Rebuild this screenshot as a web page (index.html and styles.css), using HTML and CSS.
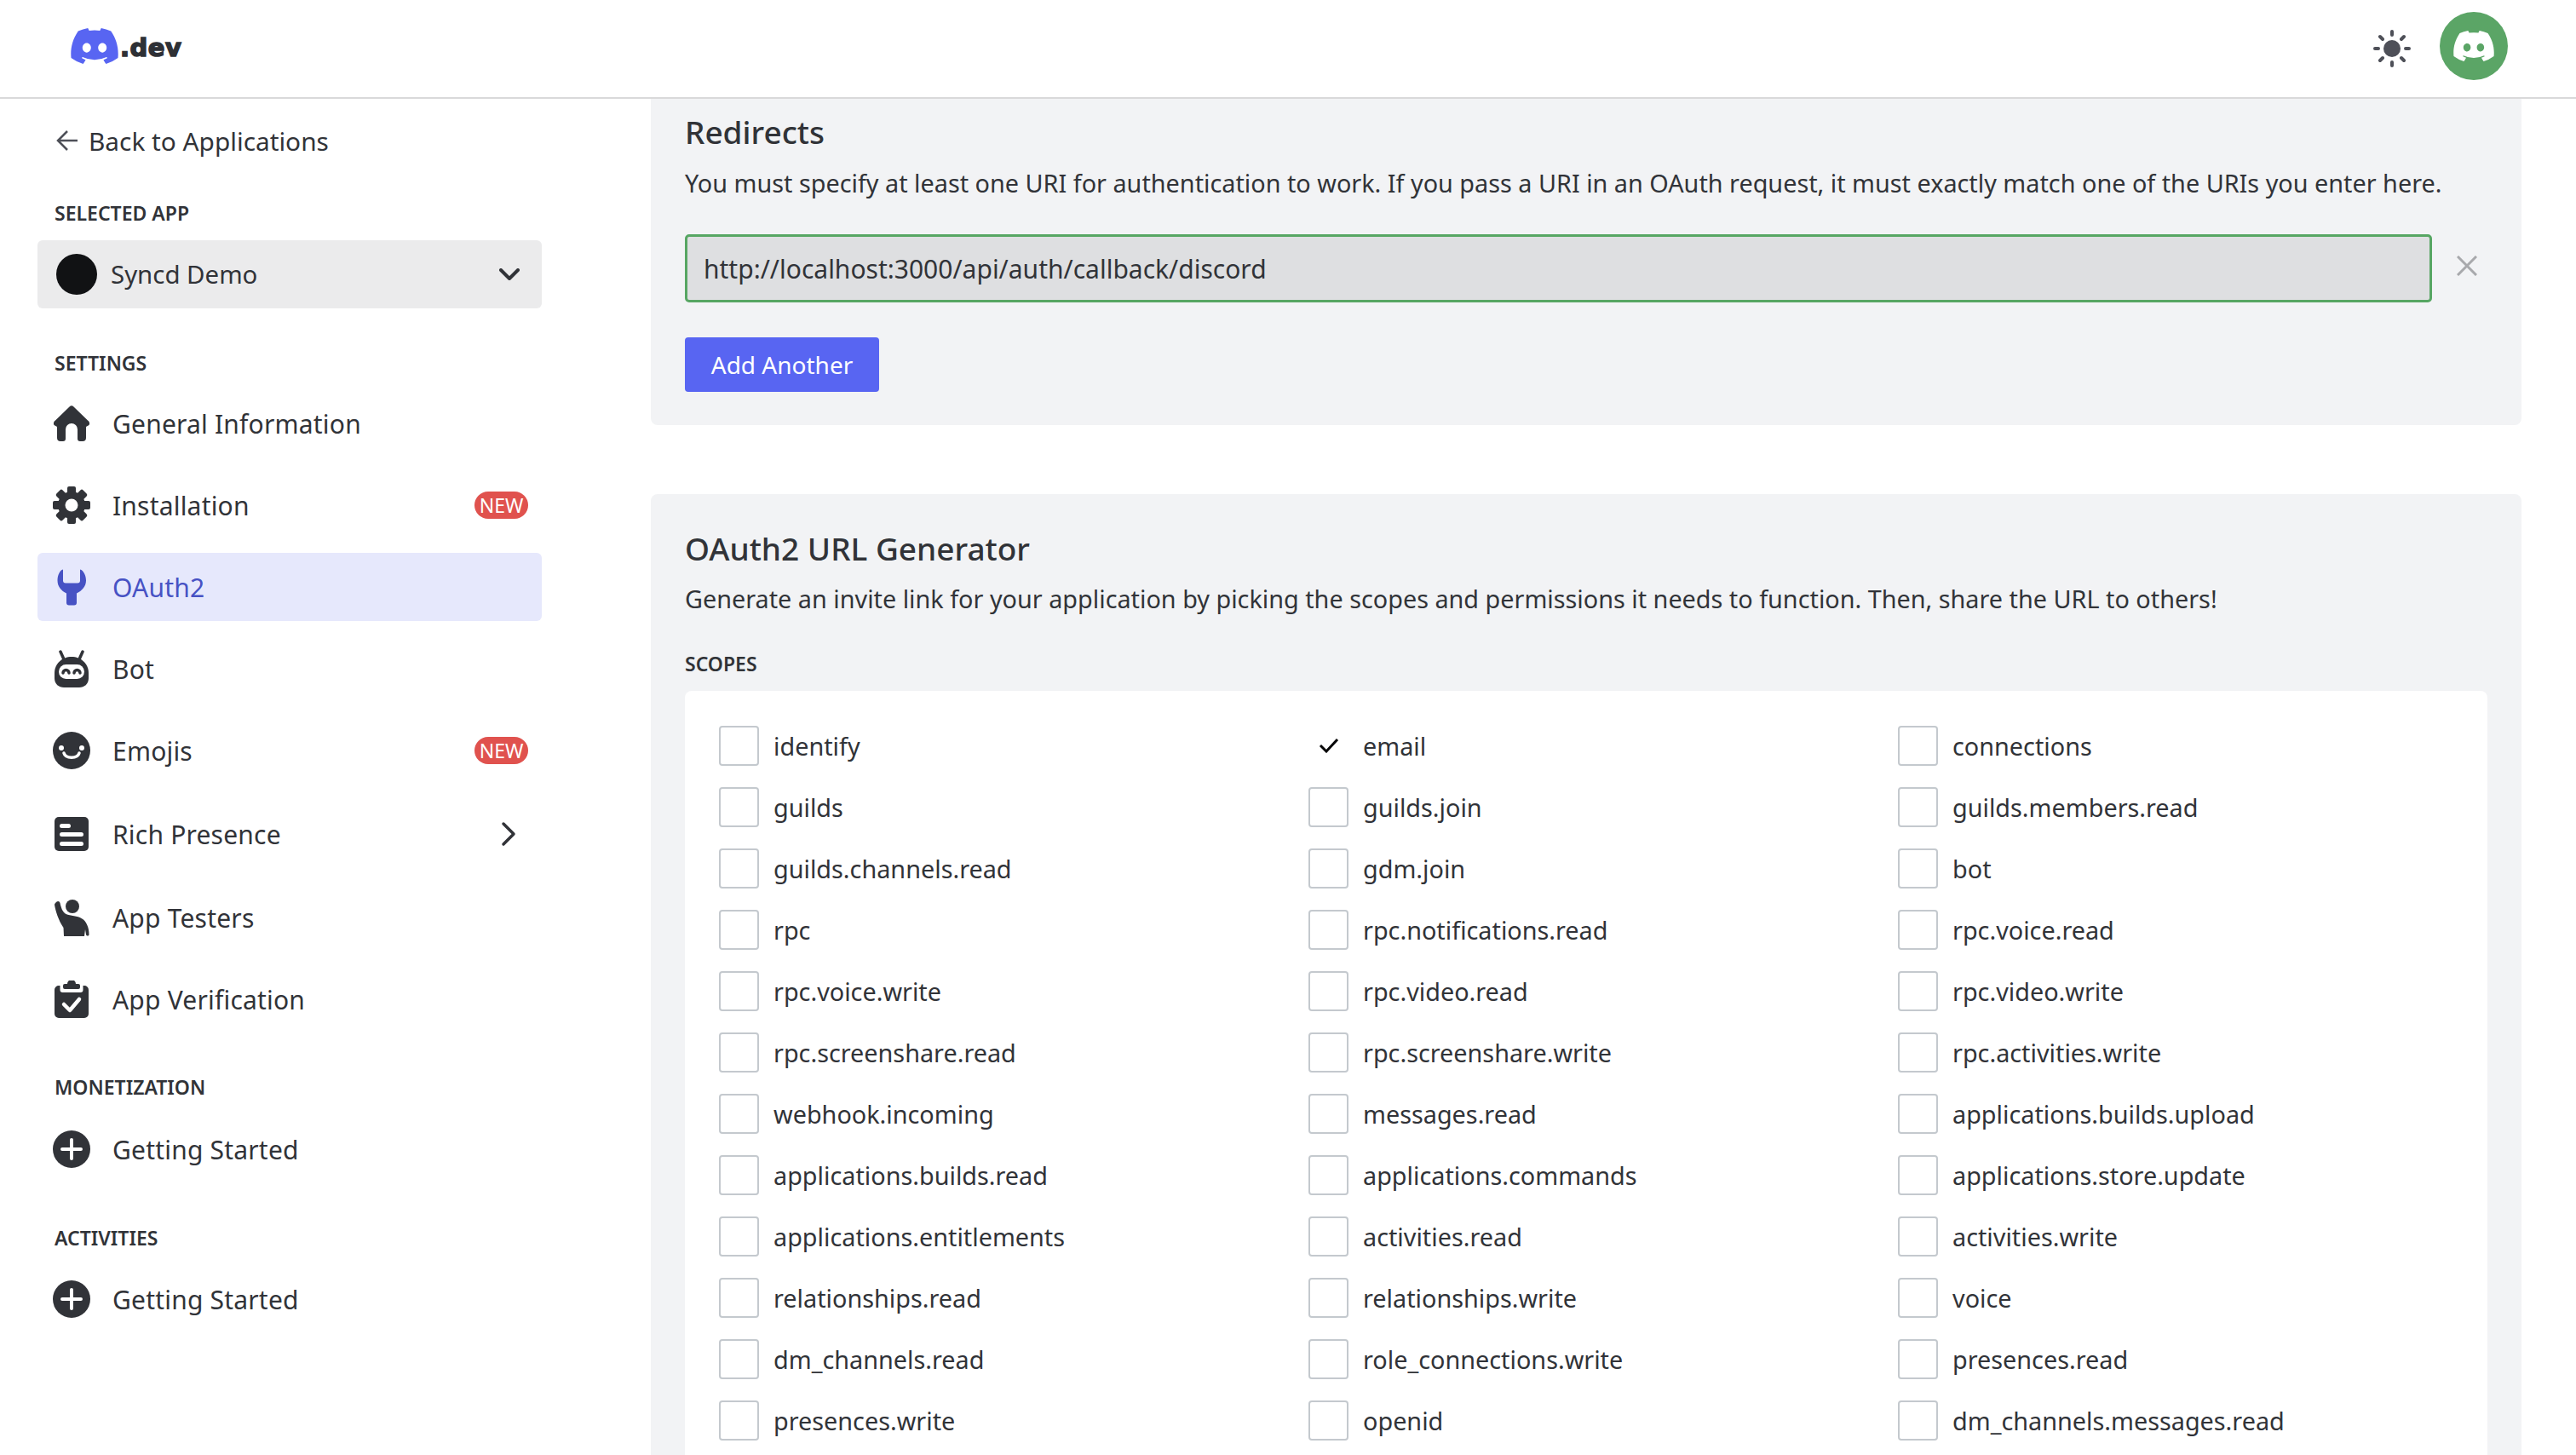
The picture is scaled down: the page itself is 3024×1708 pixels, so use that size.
FILE: index.html
```html
<!DOCTYPE html>
<html lang="en">

<head>
    <meta charset="UTF-8">
    <title>Syncd Demo - OAuth2</title>
    <link rel="stylesheet" href="styles.css">
</head>

<body>
    <svg class="defs" width="0" height="0">
        <symbol id="clyde" viewBox="0 0 127.14 96.36">
            <path d="M107.7,8.07A105.15,105.15,0,0,0,81.47,0a72.06,72.06,0,0,0-3.36,6.83A97.68,97.68,0,0,0,49,6.83,72.37,72.37,0,0,0,45.64,0,105.89,105.89,0,0,0,19.39,8.09C2.79,32.65-1.71,56.6.54,80.21h0A105.73,105.73,0,0,0,32.71,96.36,77.7,77.7,0,0,0,39.6,85.25a68.42,68.42,0,0,1-10.85-5.18c.91-.66,1.8-1.34,2.66-2a75.57,75.57,0,0,0,64.32,0c.87.71,1.76,1.39,2.66,2a68.68,68.68,0,0,1-10.87,5.19,77,77,0,0,0,6.89,11.1A105.25,105.25,0,0,0,126.6,80.22h0C129.24,52.84,122.09,29.11,107.7,8.07ZM42.45,65.69C36.18,65.69,31,60,31,53s5-12.74,11.43-12.74S54,46,53.89,53,48.84,65.69,42.45,65.69Zm42.24,0C78.41,65.69,73.25,60,73.25,53s5-12.74,11.44-12.74S96.23,46,96.12,53,91.08,65.69,84.69,65.69Z" />
        </symbol>
        <symbol id="plus" viewBox="0 0 44 44">
            <circle cx="22" cy="22" r="22" />
            <path d="M22 11v22M11 22h22" stroke="#fff" stroke-width="4" stroke-linecap="round" />
        </symbol>
    </svg>

    <header class="topbar">
        <div class="logo">
            <svg class="logo-mark"><use href="#clyde" /></svg>
            <span class="logo-text">.dev</span>
        </div>
        <div class="topbar-right">
            <svg class="sun" viewBox="0 0 44 44">
                <circle cx="22" cy="22" r="10" />
                <path d="M22 2v4M22 38v4M2 22h4M38 22h4M8 8l3 3M33 33l3 3M8 36l3-3M33 11l3-3" stroke-width="4" stroke-linecap="round" />
            </svg>
            <div class="avatar">
                <svg class="avatar-mark"><use href="#clyde" /></svg>
            </div>
        </div>
    </header>

    <div class="layout">
        <aside class="sidebar">
            <a class="back">
                <svg class="back-arrow" viewBox="0 0 26 26"><path d="M25 13H3M13 2L2 13l11 11" /></svg>
                Back to Applications
            </a>

            <h4 class="side-heading first">SELECTED APP</h4>
            <div class="app-select">
                <span class="app-dot"></span>
                <span>Syncd Demo</span>
                <svg class="select-chevron" viewBox="0 0 24 14"><path d="M2 2l10 10L22 2" /></svg>
            </div>

            <h4 class="side-heading settings">SETTINGS</h4>
            <nav class="nav">
                <a class="nav-item">
                    <svg class="nav-icon" viewBox="0 0 44 44"><path fill-rule="evenodd" d="M19.5 2.5a3.5 3.5 0 0 1 5 0L41 18.500a4 4 0 0 1 1.500 5.500L39 26v13a4 4 0 0 1-4 4h-3a3 3 0 0 1-3-3V29a7 7 0 0 0-14 0v11a3 3 0 0 1-3 3H9a4 4 0 0 1-4-4V26l-3.500-2a4 4 0 0 1 1.500-5.500z" /></svg>
                    <span>General Information</span>
                </a>
                <a class="nav-item">
                    <svg class="nav-icon" viewBox="0 0 44 44">
                        <g class="teeth">
                            <rect x="17" y="0" width="10" height="44" rx="2" />
                            <rect x="17" y="0" width="10" height="44" rx="2" transform="rotate(45 22 22)" />
                            <rect x="17" y="0" width="10" height="44" rx="2" transform="rotate(90 22 22)" />
                            <rect x="17" y="0" width="10" height="44" rx="2" transform="rotate(135 22 22)" />
                        </g>
                        <circle cx="22" cy="22" r="16" />
                        <circle cx="22" cy="22" r="7.500" fill="#fff" />
                    </svg>
                    <span>Installation</span>
                    <span class="badge">NEW</span>
                </a>
                <a class="nav-item active">
                    <svg class="nav-icon" viewBox="0 0 44 44"><path d="M12 1.500v13a3 3 0 0 0 3 3h14a3 3 0 0 0 3-3v-13c4 1 7 7 7 13 0 7-5 12-11 15v11a3 3 0 0 1-3 3h-6a3 3 0 0 1-3-3v-11C10 26.500 5.500 21.500 5.500 14.500c0-6 2.500-12 6.500-13z" /></svg>
                    <span>OAuth2</span>
                </a>
                <a class="nav-item">
                    <svg class="nav-icon" viewBox="0 0 44 44">
                        <path d="M22 8c11 0 20 8 20 19v6c0 7-5 11-11 11H13C7 44 2 40 2 33v-6C2 16 11 8 22 8z" />
                        <path class="bot-horns" d="M9 2l4 9M35 2l-4 9" />
                        <rect x="7" y="17" width="30" height="17" rx="8.500" fill="#fff" />
                        <path class="bot-eyes" d="M12 27a3.500 3.500 0 0 1 7 0M25 27a3.500 3.500 0 0 1 7 0" />
                    </svg>
                    <span>Bot</span>
                </a>
                <a class="nav-item">
                    <svg class="nav-icon" viewBox="0 0 44 44">
                        <circle cx="22" cy="22" r="22" />
                        <circle cx="10" cy="19" r="3" fill="#fff" />
                        <circle cx="34" cy="19" r="3" fill="#fff" />
                        <path class="smile" d="M13 25c2 7 16 7 18 0" />
                    </svg>
                    <span>Emojis</span>
                    <span class="badge">NEW</span>
                </a>
                <a class="nav-item tall">
                    <svg class="nav-icon" viewBox="0 0 44 44">
                        <rect x="2" y="2" width="40" height="40" rx="5" />
                        <rect x="8" y="10" width="13" height="5" rx="2.500" fill="#fff" />
                        <rect x="8" y="20" width="28" height="5" rx="2.500" fill="#fff" />
                        <rect x="8" y="31" width="28" height="5" rx="2.500" fill="#fff" />
                    </svg>
                    <span>Rich Presence</span>
                    <svg class="row-chevron" viewBox="0 0 18 30"><path d="M3 3l12 12L3 27" /></svg>
                </a>
                <a class="nav-item">
                    <svg class="nav-icon" viewBox="0 0 44 44">
                        <circle cx="23" cy="9" r="8" />
                        <path d="M4 4c2-2 4-1 4.500 1 1 5 3 11 7 13 5 2 14 2 18 5 6 3 9 11 9 19 0 2-3 2-3.500 0l-1-6-1 8H13l-.500-10C7 26 3 14 2 7c0-1 1-2 2-3z" />
                    </svg>
                    <span>App Testers</span>
                </a>
                <a class="nav-item">
                    <svg class="nav-icon" viewBox="0 0 44 44">
                        <path d="M17 4a5 5 0 0 1 10 0h3a2 2 0 0 1 2 2v2a2 2 0 0 1-2 2H14a2 2 0 0 1-2-2V6a2 2 0 0 1 2-2z" />
                        <path d="M7 6h1.500v5a3 3 0 0 0 3 3h21a3 3 0 0 0 3-3V6H37a5 5 0 0 1 5 5v28a5 5 0 0 1-5 5H7a5 5 0 0 1-5-5V11a5 5 0 0 1 5-5z" />
                        <path class="tick" d="M13 28l7 7 11-13" />
                    </svg>
                    <span>App Verification</span>
                </a>
            </nav>

            <h4 class="side-heading money">MONETIZATION</h4>
            <a class="nav-item">
                <svg class="nav-icon"><use href="#plus" /></svg>
                <span>Getting Started</span>
            </a>

            <h4 class="side-heading activities">ACTIVITIES</h4>
            <a class="nav-item">
                <svg class="nav-icon"><use href="#plus" /></svg>
                <span>Getting Started</span>
            </a>
        </aside>

        <main class="main">
            <section class="panel redirects">
                <h2>Redirects</h2>
                <p>You must specify at least one URI for authentication to work. If you pass a URI in an OAuth request, it must exactly match one of the URIs you enter here.</p>
                <div class="uri-row">
                    <input class="uri-input" type="text" value="http://localhost:3000/api/auth/callback/discord">
                    <svg class="uri-remove" viewBox="0 0 24 24"><path d="M1 1l22 22M23 1L1 23" /></svg>
                </div>
                <button class="btn">Add Another</button>
            </section>

            <section class="panel generator">
                <h2>OAuth2 URL Generator</h2>
                <p>Generate an invite link for your application by picking the scopes and permissions it needs to function. Then, share the URL to others!</p>
                <h4 class="scopes-title">SCOPES</h4>
                <div class="scopes">
                    <label class="scope"><span class="box"></span>identify</label>
                    <label class="scope"><span class="box checked"><svg viewBox="0 0 24 18"><path d="M2 9l7 7L22 2" /></svg></span>email</label>
                    <label class="scope"><span class="box"></span>connections</label>
                    <label class="scope"><span class="box"></span>guilds</label>
                    <label class="scope"><span class="box"></span>guilds.join</label>
                    <label class="scope"><span class="box"></span>guilds.members.read</label>
                    <label class="scope"><span class="box"></span>guilds.channels.read</label>
                    <label class="scope"><span class="box"></span>gdm.join</label>
                    <label class="scope"><span class="box"></span>bot</label>
                    <label class="scope"><span class="box"></span>rpc</label>
                    <label class="scope"><span class="box"></span>rpc.notifications.read</label>
                    <label class="scope"><span class="box"></span>rpc.voice.read</label>
                    <label class="scope"><span class="box"></span>rpc.voice.write</label>
                    <label class="scope"><span class="box"></span>rpc.video.read</label>
                    <label class="scope"><span class="box"></span>rpc.video.write</label>
                    <label class="scope"><span class="box"></span>rpc.screenshare.read</label>
                    <label class="scope"><span class="box"></span>rpc.screenshare.write</label>
                    <label class="scope"><span class="box"></span>rpc.activities.write</label>
                    <label class="scope"><span class="box"></span>webhook.incoming</label>
                    <label class="scope"><span class="box"></span>messages.read</label>
                    <label class="scope"><span class="box"></span>applications.builds.upload</label>
                    <label class="scope"><span class="box"></span>applications.builds.read</label>
                    <label class="scope"><span class="box"></span>applications.commands</label>
                    <label class="scope"><span class="box"></span>applications.store.update</label>
                    <label class="scope"><span class="box"></span>applications.entitlements</label>
                    <label class="scope"><span class="box"></span>activities.read</label>
                    <label class="scope"><span class="box"></span>activities.write</label>
                    <label class="scope"><span class="box"></span>relationships.read</label>
                    <label class="scope"><span class="box"></span>relationships.write</label>
                    <label class="scope"><span class="box"></span>voice</label>
                    <label class="scope"><span class="box"></span>dm_channels.read</label>
                    <label class="scope"><span class="box"></span>role_connections.write</label>
                    <label class="scope"><span class="box"></span>presences.read</label>
                    <label class="scope"><span class="box"></span>presences.write</label>
                    <label class="scope"><span class="box"></span>openid</label>
                    <label class="scope"><span class="box"></span>dm_channels.messages.read</label>
                </div>
            </section>
        </main>
    </div>
</body>

</html>
```

FILE: styles.css
```css
html, body {
    height: 100%;
}

body {
    margin: 0;
    overflow: hidden;
    background: #fff;
    color: #313338;
    font-family: "Noto Sans", sans-serif;
    font-size: 30px;
}

.defs {
    display: none;
}

/* Top bar */
.topbar {
    box-sizing: border-box;
    height: 116px;
    border-bottom: 2px solid #d9d9da;
    display: flex;
    align-items: center;
    justify-content: space-between;
    padding: 0 80px 6px 83px;
}

.logo {
    display: flex;
    align-items: center;
    gap: 2px;
}

.logo-mark {
    width: 56px;
    height: 42px;
    fill: #5865f2;
}

.logo-text {
    font-family: "DejaVu Sans", sans-serif;
    font-weight: 700;
    font-size: 29px;
    letter-spacing: 0.5px;
    -webkit-text-stroke: 1.5px #2e3035;
    color: #2e3035;
    padding-top: 4px;
}

.topbar-right {
    display: flex;
    align-items: center;
    gap: 34px;
}

.sun {
    width: 44px;
    height: 44px;
    margin-top: 6px;
    fill: #4e5058;
    stroke: #4e5058;
}

.sun circle {
    stroke: none;
}

.avatar {
    width: 80px;
    height: 80px;
    border-radius: 50%;
    background: #5ba566;
    display: flex;
    align-items: center;
    justify-content: center;
}

.avatar-mark {
    width: 48px;
    height: 36px;
    fill: #fff;
}

/* Page */
.layout {
    display: flex;
    height: calc(100% - 116px);
}

.sidebar {
    flex: 0 0 592px;
    margin-left: 44px;
    margin-right: 128px;
}

.back {
    display: flex;
    align-items: center;
    gap: 12px;
    margin: 34px 0 0 22px;
    height: 30px;
    font-size: 29.8px;
}

.back-arrow {
    width: 26px;
    height: 26px;
    fill: none;
    stroke: #4e5058;
    stroke-width: 2.500;
}

.side-heading {
    margin: 0;
    padding-left: 20px;
    font-size: 23px;
    font-weight: 600;
    line-height: 30px;
}

.side-heading.first {
    margin-top: 55px;
}

.side-heading.settings {
    margin-top: 49px;
    margin-bottom: 16px;
}

.side-heading.money {
    margin-top: 48px;
    margin-bottom: 18px;
}

.side-heading.activities {
    margin-top: 49px;
    margin-bottom: 17px;
}

.app-select {
    display: flex;
    align-items: center;
    height: 80px;
    margin-top: 17px;
    padding: 0 26px 0 22px;
    background: #ebebec;
    border-radius: 6px;
    gap: 16px;
    font-size: 29.4px;
}

.app-dot {
    width: 48px;
    height: 48px;
    border-radius: 50%;
    background: #111214;
}

.select-chevron {
    margin-left: auto;
    width: 24px;
    height: 14px;
    fill: none;
    stroke: #313338;
    stroke-width: 4;
    stroke-linecap: round;
    stroke-linejoin: round;
}

/* Nav rows */
.nav {
    display: flex;
    flex-direction: column;
    gap: 16px;
}

.nav-item {
    display: flex;
    align-items: center;
    height: 80px;
    padding: 0 16px 0 18px;
    border-radius: 6px;
    gap: 26px;
    letter-spacing: 0.2px;
}

.nav-item.tall {
    height: 84px;
}

.nav-icon {
    width: 44px;
    height: 44px;
    flex: none;
    fill: #313338;
}

.nav-item.active {
    background: #e6e8fc;
    color: #4752c4;
}

.nav-item.active .nav-icon {
    fill: #4752c4;
}

.bot-eyes,
.bot-horns,
.smile,
.tick {
    fill: none;
    stroke: #fff;
    stroke-width: 3.500;
    stroke-linecap: round;
    stroke-linejoin: round;
}

.bot-eyes,
.bot-horns {
    stroke: #313338;
}

.tick {
    stroke-width: 4.500;
}

.badge {
    margin-left: auto;
    width: 63px;
    height: 32px;
    border-radius: 16px;
    background: #e0524e;
    color: #fff;
    font-size: 23px;
    letter-spacing: 0;
    line-height: 32px;
    text-align: center;
}

.row-chevron {
    margin-left: auto;
    margin-right: 14px;
    width: 18px;
    height: 30px;
    fill: none;
    stroke: #313338;
    stroke-width: 3.500;
    stroke-linecap: round;
    stroke-linejoin: round;
}

/* Main column */
.main {
    flex: 0 0 2196px;
    min-width: 0;
}

.panel {
    background: #f2f3f5;
    border-radius: 0 0 8px 8px;
    padding: 0 40px;
}

.panel h2 {
    margin: 0;
    font-size: 37px;
    font-weight: 500;
    line-height: 50px;
}

.panel p {
    margin: 0;
    font-size: 28.8px;
    line-height: 40px;
}

.redirects {
    height: 383px;
    padding-top: 14px;
    box-sizing: border-box;
}

.redirects p {
    margin-top: 15px;
}

.uri-row {
    display: flex;
    align-items: center;
    margin-top: 40px;
}

.uri-input {
    flex: 0 0 2051px;
    box-sizing: border-box;
    height: 80px;
    padding: 0 19px;
    border: 3px solid #57a663;
    border-radius: 5px;
    background: #dedfe1;
    color: #313338;
    font-family: inherit;
    font-size: 30px;
}

.uri-remove {
    width: 24px;
    height: 24px;
    margin: -6px 0 0 29px;
    fill: none;
    stroke: #a8a9ac;
    stroke-width: 3;
}

.btn {
    display: block;
    width: 228px;
    height: 64px;
    margin-top: 41px;
    border: 0;
    border-radius: 4px;
    background: #5865f2;
    color: #fff;
    font-family: inherit;
    font-size: 28px;
}

.generator {
    margin-top: 81px;
    padding-top: 39px;
    border-radius: 8px 8px 0 0;
}

.generator p {
    margin-top: 14px;
}

.scopes-title {
    margin: 41px 0 0;
    font-size: 23px;
    font-weight: 600;
    line-height: 30px;
}

.scopes {
    display: grid;
    grid-template-columns: repeat(3, 692px);
    grid-auto-rows: 72px;
    margin-top: 17px;
    padding: 28px 0 28px 40px;
    background: #fff;
    border-radius: 8px 8px 0 0;
}

.scope {
    display: flex;
    align-items: center;
    gap: 17px;
    font-size: 28.8px;
}

.box {
    box-sizing: border-box;
    width: 47px;
    height: 47px;
    flex: none;
    border: 2px solid #c4c9ce;
    border-radius: 4px;
    background: #fff;
}

.box.checked {
    border-color: transparent;
    display: flex;
    align-items: center;
    justify-content: center;
}

.box svg {
    width: 24px;
    height: 18px;
    fill: none;
    stroke: #060607;
    stroke-width: 3;
}
```
